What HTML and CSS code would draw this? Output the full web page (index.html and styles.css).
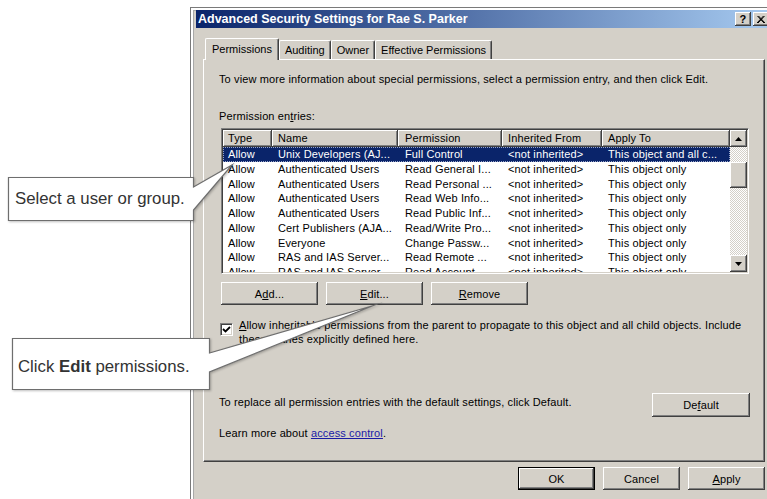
FILE: index.html
```html
<!DOCTYPE html>
<html lang="en">
<head>
<meta charset="utf-8">
<title>Advanced Security Settings for Rae S. Parker</title>
<link rel="stylesheet" href="styles.css">
</head>
<body>
<div class="dialog">
  <div class="titlebar">
    <span class="title">Advanced Security Settings for Rae S. Parker</span>
    <div class="caption-buttons">
      <span class="caption-btn">?</span>
      <span class="caption-btn"><svg width="8" height="7" viewBox="0 0 8 7"><path d="M0.5 0 L7 7 M1.5 0 L8 7 M7.5 0 L1 7 M6.5 0 L0 7" stroke="#000" stroke-width="1" fill="none"/></svg></span>
    </div>
  </div>

  <div class="tabs">
    <div class="tab tab-active">Permissions</div>
    <div class="tab">Auditing</div>
    <div class="tab">Owner</div>
    <div class="tab">Effective Permissions</div>
  </div>

  <div class="panel">
    <p class="desc">To view more information about special permissions, select a permission entry, and then click Edit.</p>
    <p class="label">Permission en<u>t</u>ries:</p>

    <div class="listview">
      <div class="list-body">
        <div class="list-row list-head">
          <span class="col-head">Type</span>
          <span class="col-head">Name</span>
          <span class="col-head">Permission</span>
          <span class="col-head">Inherited From</span>
          <span class="col-head">Apply To</span>
        </div>
        <div class="list-row selected">
          <span>Allow</span><span>Unix Developers (AJ...</span><span>Full Control</span><span>&lt;not inherited&gt;</span><span>This object and all c...</span>
        </div>
        <div class="list-row">
          <span>Allow</span><span>Authenticated Users</span><span>Read General I...</span><span>&lt;not inherited&gt;</span><span>This object only</span>
        </div>
        <div class="list-row">
          <span>Allow</span><span>Authenticated Users</span><span>Read Personal ...</span><span>&lt;not inherited&gt;</span><span>This object only</span>
        </div>
        <div class="list-row">
          <span>Allow</span><span>Authenticated Users</span><span>Read Web Info...</span><span>&lt;not inherited&gt;</span><span>This object only</span>
        </div>
        <div class="list-row">
          <span>Allow</span><span>Authenticated Users</span><span>Read Public Inf...</span><span>&lt;not inherited&gt;</span><span>This object only</span>
        </div>
        <div class="list-row">
          <span>Allow</span><span>Cert Publishers (AJA...</span><span>Read/Write Pro...</span><span>&lt;not inherited&gt;</span><span>This object only</span>
        </div>
        <div class="list-row">
          <span>Allow</span><span>Everyone</span><span>Change Passw...</span><span>&lt;not inherited&gt;</span><span>This object only</span>
        </div>
        <div class="list-row">
          <span>Allow</span><span>RAS and IAS Server...</span><span>Read Remote ...</span><span>&lt;not inherited&gt;</span><span>This object only</span>
        </div>
        <div class="list-row">
          <span>Allow</span><span>RAS and IAS Server...</span><span>Read Account ...</span><span>&lt;not inherited&gt;</span><span>This object only</span>
        </div>
      </div>
      <div class="vscroll">
        <span class="sb-btn"><svg width="7" height="4" viewBox="0 0 7 4"><path d="M3.5 0 L7 4 L0 4 Z" fill="#000"/></svg></span>
        <span class="sb-track"><span class="sb-thumb"></span></span>
        <span class="sb-btn"><svg width="7" height="4" viewBox="0 0 7 4"><path d="M0 0 L7 0 L3.5 4 Z" fill="#000"/></svg></span>
      </div>
    </div>

    <div class="btn-row">
      <button class="btn btn-wide">A<u>d</u>d...</button>
      <button class="btn btn-wide"><u>E</u>dit...</button>
      <button class="btn btn-wide"><u>R</u>emove</button>
    </div>

    <div class="check-row">
      <span class="checkbox"><svg width="9" height="9" viewBox="0 0 9 9"><path d="M1 4 L3.5 6.5 L8 2" stroke="#000" stroke-width="1.8" fill="none"/></svg></span>
      <span class="check-label"><u>A</u>llow inheritable permissions from the parent to propagate to this object and all child objects. Include<br>these entries explicitly defined here.</span>
    </div>

    <div class="default-row">
      <p class="default-text">To replace all permission entries with the default settings, click Default.</p>
      <button class="btn btn-default-settings">De<u>f</u>ault</button>
    </div>

    <p class="learn">Learn more about <a class="link" href="#">access control</a>.</p>
  </div>

  <div class="footer">
    <button class="btn btn-footer btn-primary">OK</button>
    <button class="btn btn-footer">Cancel</button>
    <button class="btn btn-footer"><u>A</u>pply</button>
  </div>
</div>

<div class="callout callout-select">
  <svg class="callout-shape" width="186" height="44" viewBox="0 0 186 44"><path d="M0.5 0.5 H185.5 V10 L224 -12 L185.5 33 V43.5 H0.5 Z"/></svg>
  <span class="callout-text">Select a user or group.</span>
</div>

<div class="callout callout-edit">
  <svg class="callout-shape" width="198" height="52" viewBox="0 0 198 52"><path d="M0.5 0.5 H197.5 V15 L360 -32 L197.5 34 V51.5 H0.5 Z"/></svg>
  <span class="callout-text">Click <b>Edit</b> permissions.</span>
</div>
</body>
</html>
```

FILE: styles.css
```css
html, body {
  margin: 0;
  padding: 0;
  width: 767px;
  height: 499px;
  overflow: hidden;
  background: #fff;
}

body {
  position: relative;
  font-family: "Liberation Sans", Arial, sans-serif;
  font-size: 11px;
  letter-spacing: 0.12px;
  color: #000;
}

p { margin: 0; }

/* ---------- window frame ---------- */
.dialog {
  box-sizing: border-box;
  width: 586px;
  height: 492px;
  margin: 7px 0 0 190px;
  padding: 2px 4px 0 5px;
  background: #d4d0c8;
  border: 1px solid #7a7a7a;
  border-bottom: none;
  box-shadow: inset 2px 2px 0 #fff, inset 3px 3px 0 #a8a8a8;
}

.titlebar {
  height: 18px;
  padding: 0 2px;
  display: flex;
  align-items: center;
  justify-content: space-between;
  background: linear-gradient(to right, #0a246a, #a6caf0);
}

.title {
  color: #fff;
  font-weight: bold;
  font-size: 12.5px;
  letter-spacing: 0;
}

.caption-buttons {
  display: flex;
  gap: 2px;
}

.caption-btn {
  box-sizing: border-box;
  width: 16px;
  height: 14px;
  display: flex;
  align-items: center;
  justify-content: center;
  background: #d4d0c8;
  font-weight: bold;
  font-size: 11px;
  line-height: 1;
  box-shadow: inset -1px -1px 0 #404040, inset 1px 1px 0 #fff, inset -2px -2px 0 #808080;
}

/* ---------- tabs ---------- */
.tabs {
  position: relative;
  z-index: 1;
  display: flex;
  align-items: flex-end;
  height: 21px;
  margin: 10px 0 0 7px;
  padding-left: 2px;
}

.tab {
  box-sizing: border-box;
  height: 19px;
  padding: 0 5px;
  line-height: 18px;
  background: #d4d0c8;
  border-top: 1px solid #fff;
  border-left: 1px solid #fff;
  border-right: 1px solid #404040;
  border-radius: 2px 2px 0 0;
  box-shadow: inset -1px 0 0 #808080;
  white-space: nowrap;
  letter-spacing: 0;
}

.tab-active {
  height: 22px;
  margin-bottom: -1px;
  padding: 0 6px;
  line-height: 20px;
}

/* ---------- tab page ---------- */
.panel {
  box-sizing: border-box;
  width: 562px;
  margin-left: 7px;
  padding: 12px 14px 21px 15px;
  border-top: 1px solid #fff;
  border-left: 1px solid #fff;
  border-right: 1px solid #404040;
  border-bottom: 1px solid #404040;
  box-shadow: inset -1px -1px 0 #808080;
  line-height: 14px;
}

.label { margin-top: 23px; }

/* ---------- list view ---------- */
.listview {
  box-sizing: border-box;
  display: flex;
  width: 528px;
  height: 146px;
  margin: 5px 0 0 2px;
  border: 1px solid;
  border-color: #808080 #fff #fff #808080;
  box-shadow: inset 1px 1px 0 #404040, inset -1px -1px 0 #d4d0c8;
  padding: 1px;
}

.list-body {
  flex: 1;
  background: #fff;
  overflow: hidden;
}

.list-row {
  display: grid;
  grid-template-columns: 49px 126px 104px 100px 128px;
  height: 14.75px;
  line-height: 14.75px;
}

.list-row > span {
  padding-left: 5px;
  white-space: nowrap;
  overflow: hidden;
}

.list-row > span:nth-child(2),
.list-row > span:nth-child(4),
.list-row > span:nth-child(5) { padding-left: 6px; }

.list-row > span:nth-child(3) { padding-left: 7px; }

.list-head {
  height: 17px;
  line-height: 17px;
  background: #d4d0c8;
}

.col-head {
  box-sizing: border-box;
  box-shadow: inset 1px 1px 0 #fff, inset -1px -1px 0 #808080, inset -2px -2px 0 #d4d0c8;
  border-right: 1px solid #404040;
  border-bottom: 1px solid #404040;
}

.selected {
  background: #0a246a;
  color: #fff;
  outline: 1px dotted #9aa6c8;
  outline-offset: -1px;
}

/* vertical scrollbar */
.vscroll {
  width: 17px;
  display: flex;
  flex-direction: column;
}

.sb-btn {
  box-sizing: border-box;
  height: 17px;
  flex: none;
  display: flex;
  align-items: center;
  justify-content: center;
  background: #d4d0c8;
  box-shadow: inset -1px -1px 0 #404040, inset 1px 1px 0 #fff, inset -2px -2px 0 #808080;
}

.sb-track {
  flex: 1;
  padding-top: 15px;
  background: repeating-conic-gradient(#d4d0c8 0 25%, #fff 0 50%) 0 0 / 2px 2px;
}

.sb-thumb {
  display: block;
  height: 26px;
  background: #d4d0c8;
  box-shadow: inset -1px -1px 0 #404040, inset 1px 1px 0 #fff, inset -2px -2px 0 #808080;
}

/* ---------- push buttons ---------- */
.btn {
  box-sizing: border-box;
  height: 23px;
  padding: 0;
  border: none;
  background: #d4d0c8;
  font-family: inherit;
  font-size: 11px;
  letter-spacing: 0.12px;
  color: #000;
  box-shadow: inset -1px -1px 0 #404040, inset 1px 1px 0 #fff, inset -2px -2px 0 #808080;
}

.btn-row {
  display: flex;
  gap: 8px;
  margin: 8px 0 0 2px;
}

.btn-wide { width: 97px; }

.check-row {
  display: flex;
  gap: 6px;
  margin: 13px 0 0 1px;
}

.checkbox {
  box-sizing: border-box;
  flex: none;
  width: 13px;
  height: 13px;
  margin-top: 5px;
  display: flex;
  align-items: center;
  justify-content: center;
  background: #fff;
  border: 1px solid;
  border-color: #808080 #fff #fff #808080;
  box-shadow: inset 1px 1px 0 #404040, inset -1px -1px 0 #d4d0c8;
}

.check-label { white-space: nowrap; }

.default-row {
  display: flex;
  justify-content: space-between;
  align-items: flex-start;
  margin-top: 47px;
}

.default-text { padding-top: 2px; }

.btn-default-settings {
  width: 98px;
  height: 24px;
}

.learn { margin-top: 9px; }

.link {
  color: #1a1aa6;
  text-decoration: underline;
}

/* ---------- dialog buttons ---------- */
.footer {
  display: flex;
  justify-content: flex-end;
  gap: 8px;
  width: 562px;
  margin: 5px 0 0 7px;
}

.btn-footer { width: 77px; }

.btn-primary {
  border: 1px solid #000;
}

/* ---------- annotation callouts ---------- */
.callout {
  position: absolute;
  z-index: 5;
  box-sizing: border-box;
  display: flex;
  align-items: center;
  font-family: "Liberation Sans", Arial, sans-serif;
  font-size: 16.8px;
  letter-spacing: 0;
  color: #333;
}

.callout-shape {
  position: absolute;
  left: 0;
  top: 0;
  z-index: -1;
  overflow: visible;
  filter: drop-shadow(1px 1px 1px rgba(0, 0, 0, 0.25));
}

.callout-shape path {
  fill: #fff;
  stroke: #6e6e6e;
  stroke-width: 1.2;
  stroke-linejoin: miter;
  stroke-miterlimit: 20;
}

.callout-text { position: relative; white-space: nowrap; }

.callout-select {
  left: 8px;
  top: 177px;
  width: 186px;
  height: 44px;
  padding-left: 7px;
}

.callout-edit {
  left: 12px;
  top: 338px;
  width: 198px;
  height: 52px;
  padding: 6px 0 0 6px;
}
```
